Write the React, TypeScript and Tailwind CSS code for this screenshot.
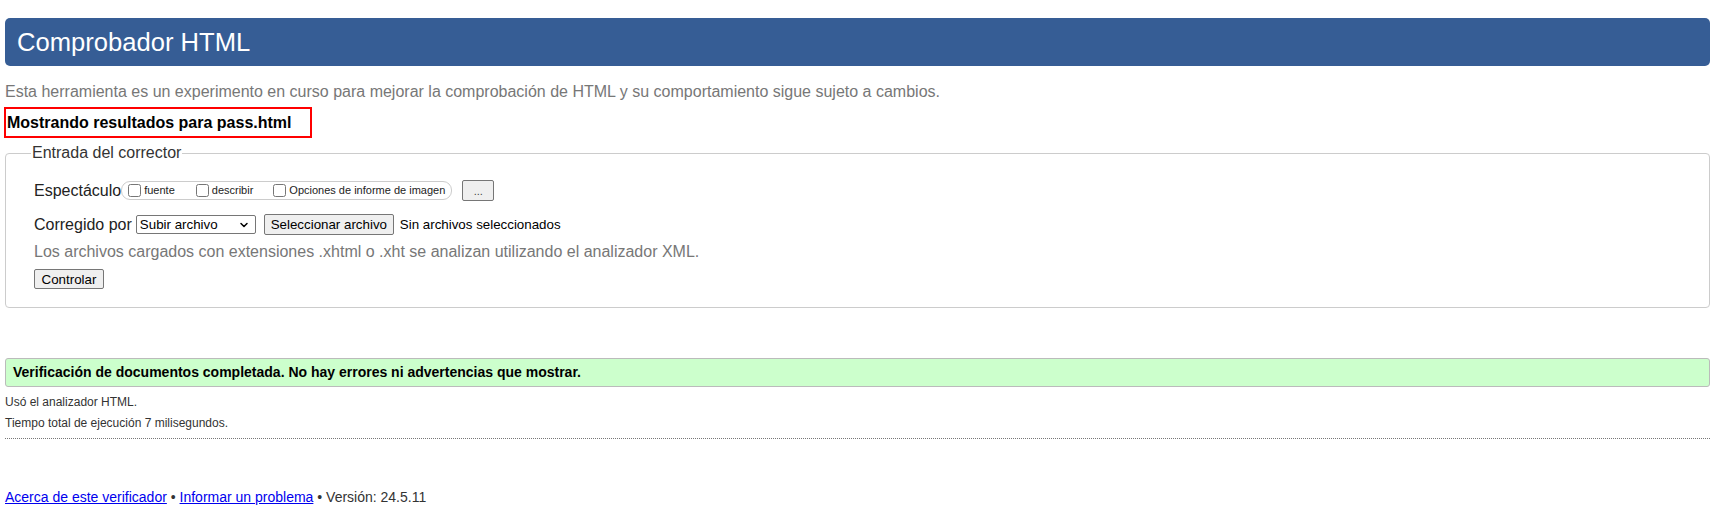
import { ChevronDown } from 'lucide-react';

export default function App() {
  return (
    <div className="min-h-[532px] bg-white pl-[5px] pr-[8px] pt-[18px] font-['Liberation_Sans',Arial,sans-serif] text-[#222]">
      <header className="flex h-[48px] items-center rounded-[5px] bg-[#365d95] pl-[12px] text-[25.6px] text-white">
        Comprobador HTML
      </header>

      <p className="mt-[17px] text-[16px] leading-[18px] text-[#777]">
        Esta herramienta es un experimento en curso para mejorar la comprobación de HTML y su comportamiento sigue sujeto a cambios.
      </p>

      <div className="-ml-[1px] mt-[6px] flex h-[31px] w-[308px] items-center border-2 border-[#ff0000] pl-[1px] text-[16px] font-bold text-black">
        Mostrando resultados para pass.html
      </div>

      <fieldset className="mt-[6px] rounded-[4px] border border-[#ccc] pb-[16px] pl-[28px] pt-[18px]">
        <legend className="-ml-[3px] px-[1px] text-[16px] leading-[18px] text-[#333]">Entrada del corrector</legend>

        <div className="flex h-[21px] items-center">
          <span className="text-[16px] text-[#222]">Espectáculo</span>
          <div className="flex h-[19px] items-center rounded-[9px] border border-[#ccc] pl-[2px] pr-[6px] text-[11px]">
            <label className="mr-[17px] flex items-center">
              <input type="checkbox" className="m-0 ml-[4px] mr-[3px] h-[13px] w-[13px]" />
              fuente
            </label>
            <label className="mr-[16px] flex items-center">
              <input type="checkbox" className="m-0 ml-[4px] mr-[3px] h-[13px] w-[13px]" />
              describir
            </label>
            <label className="flex items-center">
              <input type="checkbox" className="m-0 ml-[4px] mr-[3px] h-[13px] w-[13px]" />
              Opciones de informe de imagen
            </label>
          </div>
          <button className="ml-[10px] flex h-[21px] w-[32px] items-end justify-center rounded-[2px] border border-[#767676] bg-[#efefef] pb-[3px] text-[11px] leading-[11px] text-[#444]">
            ...
          </button>
        </div>

        <div className="mt-[13px] flex h-[21px] items-center text-[13.33px] text-black">
          <span className="text-[16px] text-[#222]">Corregido por</span>
          <div className="ml-[4px] flex h-[19px] w-[120px] items-center justify-between rounded-[2px] border border-[#767676] bg-white pl-[3px] pr-[5px]">
            <span>Subir archivo</span>
            <ChevronDown size={12} strokeWidth={3} />
          </div>
          <button className="ml-[8px] h-[21px] w-[130px] rounded-[2px] border border-[#767676] bg-[#efefef]">
            Seleccionar archivo
          </button>
          <span className="ml-[6px]">Sin archivos seleccionados</span>
        </div>

        <p className="mt-[8px] text-[16px] leading-[18px] text-[#777]">
          Los archivos cargados con extensiones .xhtml o .xht se analizan utilizando el analizador XML.
        </p>

        <button className="mt-[8px] h-[20px] w-[70px] rounded-[2px] border border-[#767676] bg-[#efefef] text-[13.33px] text-black">
          Controlar
        </button>
      </fieldset>

      <div className="mt-[50px] flex h-[29px] items-center rounded-[3px] border border-[#bbb] bg-[#ccffcc] pl-[7px] text-[14px] font-bold text-black">
        Verificación de documentos completada. No hay errores ni advertencias que mostrar.
      </div>

      <p className="mt-[8px] text-[12px] leading-[14px] text-[#333]">Usó el analizador HTML.</p>
      <p className="mt-[7px] text-[12px] leading-[14px] text-[#333]">Tiempo total de ejecución 7 milisegundos.</p>

      <div className="mt-[8px] border-t border-dotted border-[#777]" />

      <p className="mt-[50px] text-[14px] leading-[16px] text-[#333]">
        <a href="#" className="text-[#0000ee] underline">Acerca de este verificador</a>
        {' • '}
        <a href="#" className="text-[#0000ee] underline">Informar un problema</a>
        {' • Versión: 24.5.11'}
      </p>
    </div>
  );
}
